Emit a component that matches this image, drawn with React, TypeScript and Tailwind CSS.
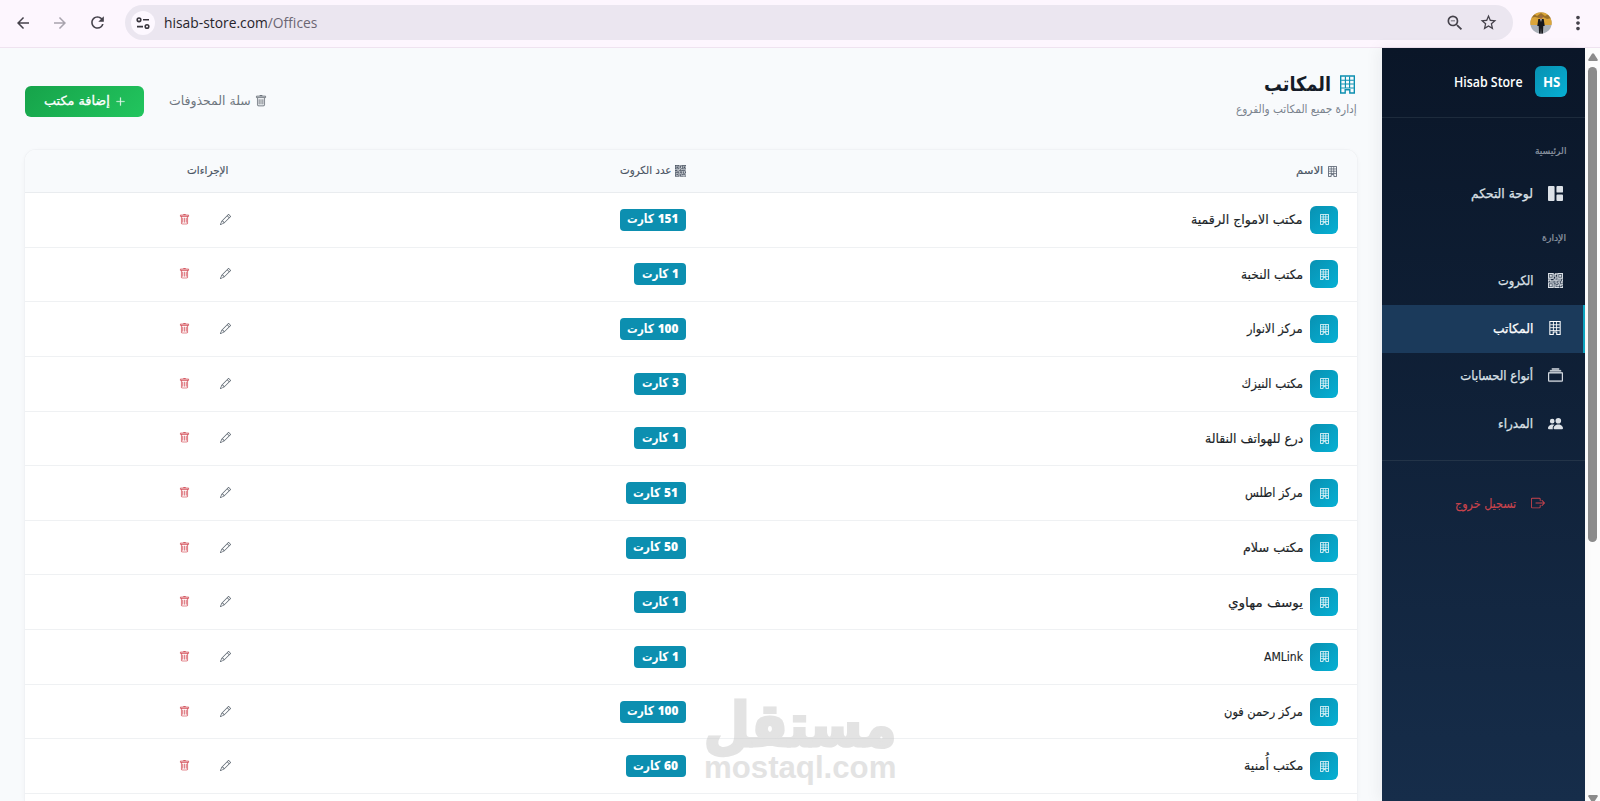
import { useLayoutEffect, useRef } from "react";
import type { ReactNode } from "react";
import {
  BsBoxArrowRight,
  BsCollection,
  BsGrid1X2Fill,
  BsPencil,
  BsPeopleFill,
  BsPlusLg,
  BsQrCode,
  BsTrash,
} from "react-icons/bs";
import {
  MdArrowBack,
  MdArrowForward,
  MdMoreVert,
  MdOutlineZoomOut,
  MdRefresh,
  MdStarOutline,
} from "react-icons/md";

const offices = [
  { name: "مكتب الامواج الرقمية", width: 112, cards: 151 },
  { name: "مكتب النخبة", width: 62, cards: 1 },
  { name: "مركز الانوار", width: 56, cards: 100 },
  { name: "مكتب النيزك", width: 61, cards: 3 },
  { name: "درع للهواتف النقالة", width: 98, cards: 1 },
  { name: "مركز اطلس", width: 58, cards: 51 },
  { name: "مكتب سلام", width: 60, cards: 50 },
  { name: "يوسف مهاوي", width: 75, cards: 1 },
  { name: "AMLink", width: 39, cards: 1 },
  { name: "مركز رحمن فون", width: 79, cards: 100 },
  { name: "مكتب أُمنية", width: 59, cards: 60 },
];

// Condenses a line of text so that it fills exactly the given width
function Fit({
  width,
  className = "",
  ltr = false,
  children,
}: {
  width: number;
  className?: string;
  ltr?: boolean;
  children: ReactNode;
}) {
  const ref = useRef<HTMLSpanElement>(null);

  useLayoutEffect(() => {
    const el = ref.current;
    if (el) el.style.transform = `scaleX(${width / el.offsetWidth})`;
  }, [width, children]);

  return (
    <span className={`flex shrink-0 ${className}`} style={{ width }}>
      <span
        ref={ref}
        className={`inline-block shrink-0 whitespace-nowrap ${ltr ? "origin-left" : "origin-right"}`}
      >
        {children}
      </span>
    </span>
  );
}

// Office block: frame, three rows of windows and a doorway
function Building({ className = "" }: { className?: string }) {
  return (
    <svg viewBox="0 0 13 16" className={className} fill="none" stroke="currentColor">
      <path d="M.6.6h11.800v14.800H8.500v-2.900h-4v2.900H.6z" strokeWidth="1.2" />
      <path d="M4.700 1v10.500M8.300 1v10.500M1 4.300h11M1 7.600h11M1 11h11" strokeWidth="1" />
    </svg>
  );
}

function BrowserBar() {
  return (
    <div
      dir="ltr"
      className="flex h-12 shrink-0 items-start border-b border-[#efe3f0] bg-[#fdf6fe] pt-[5px] text-[#45424b]"
    >
      <div className="flex h-[35px] w-[125px] shrink-0 items-center pl-[14px]">
        <MdArrowBack className="size-[18px]" />
        <MdArrowForward className="ml-[19px] size-[18px] text-[#a8a3ad]" />
        <MdRefresh className="ml-[19px] size-[19px]" />
      </div>
      <div className="flex h-[35px] w-[1388px] items-center rounded-full bg-[#ebe6f0] pl-[6px]">
        <span className="flex size-6 items-center justify-center rounded-full bg-[#fdf8ff]">
          <svg viewBox="0 0 14 12" className="h-3 w-[14px]" fill="none" stroke="#37343c" strokeWidth="1.6">
            <circle cx="3" cy="2.8" r="1.8" />
            <path d="M7 2.8h6M1 9.6h6" />
            <circle cx="11" cy="9.6" r="1.8" />
          </svg>
        </span>
        <Fit width={153} ltr className="ml-[9px] font-['Open_Sans',sans-serif] text-[15px] text-[#27242b]">
          hisab-store.com<span className="text-[#6b6673]">/Offices</span>
        </Fit>
        <MdOutlineZoomOut className="ml-auto size-[20px]" />
        <MdStarOutline className="mr-[15px] ml-[14px] size-[19px]" />
      </div>
      <div className="flex h-[35px] items-center">
        <svg viewBox="0 0 22 22" className="ml-[17px] size-[22px]">
          <defs>
            <clipPath id="avatar">
              <circle cx="11" cy="11" r="10.7" />
            </clipPath>
          </defs>
          <g clipPath="url(#avatar)">
            <rect width="22" height="22" fill="#aab0b8" />
            <rect width="22" height="13" fill="#dba53a" />
            <path d="M0 4l4-2 3 2 4-3 4 3 4-2 3 2v2l-5 1-4-2-4 1-4-1-5 1z" fill="#9a7028" />
            <circle cx="11" cy="5" r="1.8" fill="#9c6b48" />
            <path d="M8.300 7h5.400l1 7h-1.400l-.4 8h-1.500L11 16l-.4 6H9.100l-.4-8H7.300z" fill="#15161b" />
            <path d="M10.300 7h1.400L11 10z" fill="#eee" />
          </g>
        </svg>
        <MdMoreVert className="ml-[15px] size-[22px]" />
      </div>
    </div>
  );
}

function NavItem({
  icon,
  label,
  width,
  active = false,
}: {
  icon: ReactNode;
  label: string;
  width: number;
  active?: boolean;
}) {
  return (
    <a
      className={`flex h-[47.5px] items-center gap-[14px] border-r-2 pr-5 pb-px text-[13px] [-webkit-text-stroke:0.25px] ${
        active
          ? "border-[#0ea5c0] bg-[#1b3a5b] text-white"
          : "border-transparent text-[#dce1e7]"
      }`}
    >
      <span className="flex w-4 justify-center text-[15px]">{icon}</span>
      <Fit width={width}>{label}</Fit>
    </a>
  );
}

function Sidebar() {
  return (
    <aside className="flex w-[203px] shrink-0 flex-col bg-linear-to-b from-[#0a1628] to-[#162d4a] shadow-[-4px_0_14px_rgba(15,23,42,0.05)]">
      <div className="flex h-[70px] items-center gap-3 border-b border-[#1d2b3c] pr-[18px] pb-0.5">
        <div className="flex h-[31px] w-8 items-center justify-center rounded-md bg-linear-135 from-[#0891b2] to-[#06b0d4] text-sm font-bold text-white">
          <Fit width={17} ltr className="font-['Open_Sans',sans-serif] [direction:ltr]">
            HS
          </Fit>
        </div>
        <Fit width={69} className="font-['Open_Sans',sans-serif] text-[14px] font-semibold text-white">
          Hisab Store
        </Fit>
      </div>
      <div className="flex h-[52px] items-center pt-[14px] pr-[19px] text-[9.500px] text-[#8f98a4] [-webkit-text-stroke:0.2px]">
        <Fit width={31}>الرئيسية</Fit>
      </div>
      <NavItem icon={<BsGrid1X2Fill />} label="لوحة التحكم" width={62} />
      <div className="flex h-10 items-center pt-px pr-[19px] text-[9.500px] text-[#8f98a4] [-webkit-text-stroke:0.2px]">
        <Fit width={24}>الإدارة</Fit>
      </div>
      <NavItem icon={<BsQrCode className="[&_path]:stroke-current [&_path]:stroke-[0.4]" />} label="الكروت" width={35} />
      <NavItem icon={<Building className="h-[14px] w-[12px]" />} label="المكاتب" width={40} active />
      <NavItem
        icon={<BsCollection className="[&_path]:stroke-current [&_path]:stroke-[0.5]" />}
        label="أنواع الحسابات"
        width={73}
      />
      <NavItem icon={<BsPeopleFill />} label="المدراء" width={35} />
      <div className="mt-3 flex items-center gap-[15px] border-t border-[#233448] pt-[33px] pr-10 text-[13px] text-[#c9434c] [-webkit-text-stroke:0.15px]">
        <BsBoxArrowRight className="size-[14px]" />
        <Fit width={61}>تسجيل خروج</Fit>
      </div>
    </aside>
  );
}

function OfficeRow({ name, width, cards }: { name: string; width: number; cards: number }) {
  const textWidth = cards > 99 ? 51 : cards > 9 ? 45 : 37;

  return (
    <div className="grid h-[54.65px] shrink-0 grid-cols-[651px_316px_365px] items-center border-b border-[#eff1f3]">
      <div className="flex items-center gap-[7px] pr-[19px]">
        <span className="flex size-7 items-center justify-center rounded-md bg-linear-135 from-[#0891b2] to-[#06b0d4] text-white">
          <Building className="h-[11px] w-[9px]" />
        </span>
        <Fit width={width} className="text-[13px] text-[#1b1f27] [-webkit-text-stroke:0.15px]">
          {name}
        </Fit>
      </div>
      <div className="flex pr-5">
        <span className="flex h-[22px] items-center rounded-[4px] bg-[#0c8fb0] px-[7.500px] text-[12.500px] font-bold text-white">
          <Fit width={textWidth}>
            <span className="font-['Open_Sans','DejaVu_Sans',sans-serif] font-extrabold">{cards}</span> كارت
          </Fit>
        </span>
      </div>
      <div className="flex items-center justify-center gap-[30px] pr-[6px] pb-px text-[11px]">
        <BsPencil className="text-[#5c6670]" />
        <BsTrash className="text-[#d65a64] [&_path]:stroke-current [&_path]:stroke-[0.2]" />
      </div>
    </div>
  );
}

export default function App() {
  return (
    <div
      dir="rtl"
      className="relative flex h-[801px] w-[1600px] flex-col overflow-hidden bg-[#f8fafc] font-['DejaVu_Sans_Condensed','DejaVu_Sans',sans-serif]"
    >
      <BrowserBar />
      <div className="flex min-h-0 flex-1">
        {/* Scrollbar */}
        <div className="flex w-[15px] shrink-0 flex-col items-center bg-[#fcfcfc] pt-[5px]">
          <svg viewBox="0 0 10 8" className="h-2 w-[10px]" fill="#8b8b8b">
            <path d="M4 .8Q5-.4 6 .8L9.700 6.500Q10 8 9 8H1Q0 8 .3 6.500Z" />
          </svg>
          <div className="mt-[6px] h-[475px] w-[9px] rounded-full bg-[#8b8b8b]" />
          <svg viewBox="0 0 10 8" className="mt-auto -mb-0.5 h-2 w-[10px]" fill="#8b8b8b">
            <path d="M4 7.200Q5 8.400 6 7.200L9.700 1.500Q10 0 9 0H1Q0 0 .3 1.500Z" />
          </svg>
        </div>

        <Sidebar />

        <main className="flex min-w-0 flex-1 flex-col px-[25px]">
          <header className="flex h-[101px] shrink-0 justify-between">
            <div className="pt-[22px]">
              <div className="flex h-7 items-center gap-[9px] pr-0.5">
                <Building className="h-[19px] w-[15px] text-[#0c8fb0]" />
                <Fit width={67} className="text-[20px] font-bold text-[#151c28]">
                  المكاتب
                </Fit>
              </div>
              <Fit width={121} className="mt-[3px] text-[11.500px] text-[#7a838e]">
                إدارة جميع المكاتب والفروع
              </Fit>
            </div>
            <div className="mt-[38px] flex h-[31px] items-center">
              <span className="flex items-center gap-1 pr-px text-[12.500px] text-[#6d757e]">
                <BsTrash className="mb-0.5 size-3 [&_path]:stroke-current [&_path]:stroke-[0.2]" />
                <Fit width={82}>سلة المحذوفات</Fit>
              </span>
              <button className="mr-[25px] flex h-[31px] w-[119px] items-center justify-center gap-[5px] rounded-md bg-linear-135 from-[#16a34a] to-[#22c55e] pb-px text-[12.500px] text-white [-webkit-text-stroke:0.3px]">
                <BsPlusLg className="size-[11px] [&_path]:stroke-current [&_path]:stroke-[0.4]" />
                <Fit width={66}>إضافة مكتب</Fit>
              </button>
            </div>
          </header>

          <section className="-mx-px flex min-h-0 flex-1 flex-col overflow-hidden rounded-t-xl border border-b-0 border-[#f0f2f5] bg-white shadow-[0_1px_4px_rgba(15,23,42,0.03)]">
            <div className="grid h-[43px] shrink-0 grid-cols-[651px_316px_365px] items-center border-b border-[#e9ecef] bg-[#f8fafc] text-[11px] text-[#4a5463] [-webkit-text-stroke:0.15px]">
              <div className="flex items-center gap-[5px] pr-5">
                <Building className="h-[11px] w-[9px]" />
                <Fit width={27}>الاسم</Fit>
              </div>
              <div className="flex items-center gap-[3px] pr-5">
                <BsQrCode className="size-[11.5px] [&_path]:stroke-current [&_path]:stroke-[0.3]" />
                <Fit width={51}>عدد الكروت</Fit>
              </div>
              <div className="flex justify-center">
                <Fit width={41}>الإجراءات</Fit>
              </div>
            </div>
            {offices.map((office) => (
              <OfficeRow key={office.name} {...office} />
            ))}
          </section>
        </main>
      </div>

      {/* Watermark */}
      <div className="pointer-events-none absolute top-[696px] left-[704px] flex w-[192px] flex-col text-[#c8c8c8] opacity-50">
        <Fit width={192} className="h-[55px] text-[60px] leading-[58px] font-bold [-webkit-text-stroke:3px] [stroke-linejoin:round]">
          مستقل
        </Fit>
        <Fit
          width={192}
          ltr
          className="h-8 font-['Liberation_Sans',sans-serif] text-[32px] leading-8 font-bold [direction:ltr]"
        >
          mostaql.com
        </Fit>
      </div>
    </div>
  );
}
